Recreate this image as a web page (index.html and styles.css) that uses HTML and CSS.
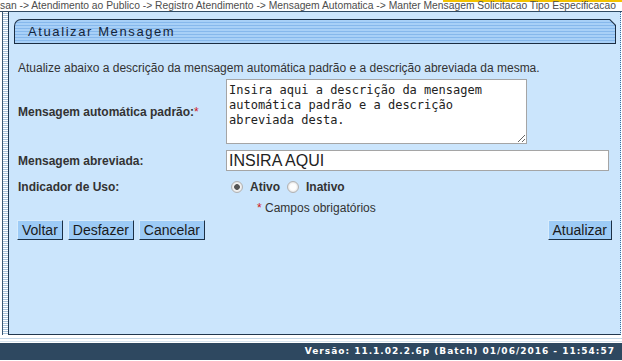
FILE: index.html
```html
<!DOCTYPE html>
<html lang="pt-BR">
<head>
  <meta charset="UTF-8">
  <title>Atualizar Mensagem</title>
  <link rel="stylesheet" href="styles.css">
</head>
<body>
  <div class="crumbs">san -&gt; Atendimento ao Publico -&gt; Registro Atendimento -&gt; Mensagem Automatica -&gt; Manter Mensagem Solicitacao Tipo Especificacao</div>

  <div class="main">
    <div class="side"></div>

    <div class="panel">
      <div class="tab">
        <div class="tab-inner">Atualizar Mensagem</div>
      </div>

      <p class="intro">Atualize abaixo a descrição da mensagem automática padrão e a descrição abreviada da mesma.</p>

      <form class="form">
        <label class="lbl" for="msgPadrao">Mensagem automática padrão:<span class="req">*</span></label>
        <textarea id="msgPadrao" class="area">Insira aqui a descrição da mensagem automática padrão e a descrição abreviada desta.</textarea>

        <label class="lbl" for="msgAbrev">Mensagem abreviada:</label>
        <input id="msgAbrev" class="field" type="text" value="INSIRA AQUI">

        <span class="lbl">Indicador de Uso:</span>
        <div class="radios">
          <input type="radio" name="uso" id="ativo" checked>
          <label for="ativo">Ativo</label>
          <input type="radio" name="uso" id="inativo">
          <label for="inativo">Inativo</label>
        </div>

        <span></span>
        <div class="note"><span class="req">*</span> Campos obrigatórios</div>
      </form>

      <div class="actions">
        <button class="btn">Voltar</button>
        <button class="btn">Desfazer</button>
        <button class="btn">Cancelar</button>
        <button class="btn right">Atualizar</button>
      </div>
    </div>
  </div>

  <div class="gap"></div>
  <div class="footer">Versão: 11.1.02.2.6p (Batch) 01/06/2016 - 11:54:57</div>
</body>
</html>
```

FILE: styles.css
```css
body {
  margin: 0;
  width: 622px;
  height: 361px;
  overflow: hidden;
  font-family: "Liberation Sans", Arial, sans-serif;
  background: #fff;
}

.crumbs {
  height: 11px;
  line-height: 11px;
  font-size: 10.3px;
  color: #4d4d4d;
  white-space: nowrap;
  overflow: hidden;
  border-bottom: 1px solid #2f4a63;
  background: linear-gradient(#f2c200, #f2c200) no-repeat right top / 179px 2px, #fff;
}

.main {
  display: flex;
  height: 323px;
}

.side {
  width: 5px;
  margin-left: 2px;
  border-left: 1px solid #3b5874;
  background: repeating-linear-gradient(#ffffff 0 1px, #a9c3da 1px 2px);
}

.panel {
  flex: 1;
  margin-right: 1px;
  background: #cbe5fc;
  border-left: 1px solid #22384f;
  border-bottom: 1px solid #22384f;
  border-right: 1px dotted #3d6d9c;
  padding: 7px 0 0 0;
  display: flex;
  flex-direction: column;
}

.tab {
  margin: 0 4px 0 5px;
  padding: 1px;
  background: #1b2d42;
  border-top-left-radius: 7px;
  clip-path: polygon(0 0, calc(100% - 6px) 0, 100% 6px, 100% 100%, 0 100%);
}

.tab-inner {
  height: 23px;
  line-height: 23px;
  padding-left: 13px;
  font-size: 13px;
  letter-spacing: 1.6px;
  color: #14243a;
  border-top-left-radius: 6px;
  background: repeating-linear-gradient(#a8d0f7 0 2px, #86b8ec 2px 3px);
  clip-path: polygon(0 0, calc(100% - 5.5px) 0, 100% 5.5px, 100% 100%, 0 100%);
}

.intro {
  margin: 17px 0 4px 9px;
  font-size: 12px;
  line-height: 14px;
  color: #333;
}

.form {
  display: grid;
  grid-template-columns: 208px 1fr;
  align-items: center;
  margin-left: 9px;
  margin-right: 11px;
  row-gap: 6px;
}

.lbl {
  font-size: 12px;
  font-weight: bold;
  color: #333;
}

.req {
  color: #d01818;
  font-weight: normal;
}

.area {
  box-sizing: border-box;
  width: 301px;
  height: 65px;
  margin: 0;
  padding: 3px 2px;
  border: 1px solid #a5a5a5;
  font-family: "DejaVu Sans Mono", monospace;
  font-size: 12px;
  line-height: 15px;
  color: #222;
  background: #fff;
}

.field {
  box-sizing: border-box;
  width: 383px;
  height: 21px;
  margin: 0;
  padding: 0 2px;
  border: 1px solid #a5a5a5;
  font-family: "Liberation Sans", Arial, sans-serif;
  font-size: 16px;
  color: #222;
}

.radios {
  display: flex;
  align-items: center;
  height: 20px;
  padding-left: 5px;
  font-size: 12px;
  font-weight: bold;
  color: #333;
}

.radios input {
  appearance: none;
  width: 12px;
  height: 12px;
  margin: 0 7px 0 0;
  border: 1px solid #b2b2b2;
  border-radius: 50%;
  background: radial-gradient(circle, #fdfdfd 0 3px, #e4e4e4 5px);
}

.radios input:checked {
  background: radial-gradient(circle, #555 0 2.5px, #f4f4f4 3.2px, #e0e0e0 6px);
}

.radios label {
  margin-right: 7px;
}

.note {
  padding-left: 31px;
  font-size: 12px;
  color: #333;
  margin-top: -2px;
}

.actions {
  display: flex;
  gap: 5px;
  margin: 5px 8px 0 8px;
}

.btn {
  height: 20px;
  padding: 0 4px;
  font-family: "Liberation Sans", Arial, sans-serif;
  font-size: 14px;
  color: #1a1a1a;
  background: #9dcbf6;
  border: 1px solid;
  border-color: #d8ecfc #1c3045 #1c3045 #d8ecfc;
}

.btn.right {
  margin-left: auto;
}

.gap {
  height: 8px;
  background: linear-gradient(#fff 0 3px, #c3d6e6 3px 4px, #fff 4px 6px, #d7e4ee 6px 7px, #fff 7px);
}

.footer {
  height: 17px;
  line-height: 17px;
  background: #2e4860;
  color: #fff;
  font-family: "DejaVu Sans", Verdana, sans-serif;
  font-size: 9px;
  font-weight: bold;
  letter-spacing: 1px;
  text-align: right;
  padding-right: 7px;
}
```
